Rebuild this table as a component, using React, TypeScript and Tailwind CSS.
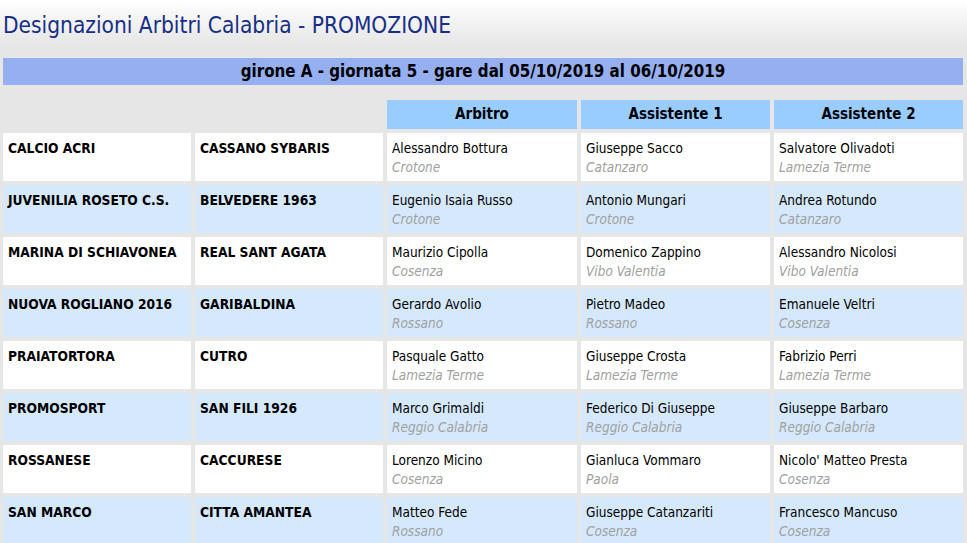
const font = { fontFamily: '"DejaVu Sans Condensed", "DejaVu Sans", sans-serif' };

type Person = { name: string; city: string };
type Match = { home: string; away: string; refs: [Person, Person, Person] };

const matches: Match[] = [
  {
    home: "CALCIO ACRI",
    away: "CASSANO SYBARIS",
    refs: [
      { name: "Alessandro Bottura", city: "Crotone" },
      { name: "Giuseppe Sacco", city: "Catanzaro" },
      { name: "Salvatore Olivadoti", city: "Lamezia Terme" },
    ],
  },
  {
    home: "JUVENILIA ROSETO C.S.",
    away: "BELVEDERE 1963",
    refs: [
      { name: "Eugenio Isaia Russo", city: "Crotone" },
      { name: "Antonio Mungari", city: "Crotone" },
      { name: "Andrea Rotundo", city: "Catanzaro" },
    ],
  },
  {
    home: "MARINA DI SCHIAVONEA",
    away: "REAL SANT AGATA",
    refs: [
      { name: "Maurizio Cipolla", city: "Cosenza" },
      { name: "Domenico Zappino", city: "Vibo Valentia" },
      { name: "Alessandro Nicolosi", city: "Vibo Valentia" },
    ],
  },
  {
    home: "NUOVA ROGLIANO 2016",
    away: "GARIBALDINA",
    refs: [
      { name: "Gerardo Avolio", city: "Rossano" },
      { name: "Pietro Madeo", city: "Rossano" },
      { name: "Emanuele Veltri", city: "Cosenza" },
    ],
  },
  {
    home: "PRAIATORTORA",
    away: "CUTRO",
    refs: [
      { name: "Pasquale Gatto", city: "Lamezia Terme" },
      { name: "Giuseppe Crosta", city: "Lamezia Terme" },
      { name: "Fabrizio Perri", city: "Lamezia Terme" },
    ],
  },
  {
    home: "PROMOSPORT",
    away: "SAN FILI 1926",
    refs: [
      { name: "Marco Grimaldi", city: "Reggio Calabria" },
      { name: "Federico Di Giuseppe", city: "Reggio Calabria" },
      { name: "Giuseppe Barbaro", city: "Reggio Calabria" },
    ],
  },
  {
    home: "ROSSANESE",
    away: "CACCURESE",
    refs: [
      { name: "Lorenzo Micino", city: "Cosenza" },
      { name: "Gianluca Vommaro", city: "Paola" },
      { name: "Nicolo' Matteo Presta", city: "Cosenza" },
    ],
  },
  {
    home: "SAN MARCO",
    away: "CITTA AMANTEA",
    refs: [
      { name: "Matteo Fede", city: "Rossano" },
      { name: "Giuseppe Catanzariti", city: "Cosenza" },
      { name: "Francesco Mancuso", city: "Cosenza" },
    ],
  },
];

export default function App() {
  return (
    <div
      className="min-h-[543px] w-[967px] bg-[linear-gradient(to_bottom,#ffffff_0px,#e6e6e6_45px,#e6e6e6_100%)] text-black"
      style={font}
    >
      <h1 className="h-[58px] pl-[3px] pt-[11px] text-[22.5px] leading-[28px] text-[#172f84]">
        Designazioni Arbitri Calabria - PROMOZIONE
      </h1>
      <div className="mx-[3px] flex h-[27px] w-[960px] items-center justify-center bg-[#96aff0] text-[16.8px] font-bold">
        girone A - giornata 5 - gare dal 05/10/2019 al 06/10/2019
      </div>
      <div className="mt-[15px] grid w-[967px] grid-cols-[188px_188px_190px_189px_189px] gap-1 px-[3px]">
        <div />
        <div />
        {["Arbitro", "Assistente 1", "Assistente 2"].map((h) => (
          <div key={h} className="flex h-[29px] items-center justify-center bg-[#99ccff] text-[15px] font-bold">
            {h}
          </div>
        ))}
        {matches.map((m, i) => {
          const bg = i % 2 === 0 ? "bg-white" : "bg-[#d5e8fc]";
          return [
            <div key={`${i}h`} className={`${bg} h-[48px] px-[5px] pt-[6px] text-[13.7px] font-bold leading-[19px]`}>
              {m.home}
            </div>,
            <div key={`${i}a`} className={`${bg} h-[48px] px-[5px] pt-[6px] text-[13.7px] font-bold leading-[19px]`}>
              {m.away}
            </div>,
            ...m.refs.map((r, j) => (
              <div key={`${i}r${j}`} className={`${bg} h-[48px] px-[5px] pt-[6px] text-[13.5px] leading-[19px]`}>
                <div>{r.name}</div>
                <div className="italic text-[#a0a0a0]">{r.city}</div>
              </div>
            )),
          ];
        })}
      </div>
    </div>
  );
}
